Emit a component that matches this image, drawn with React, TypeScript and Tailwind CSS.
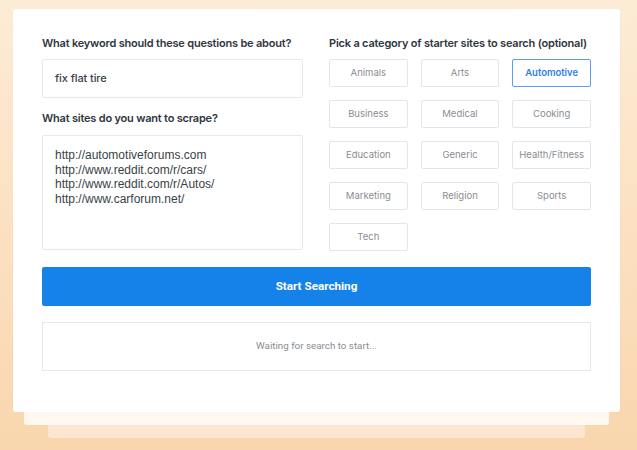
import React from "react";

const cats = [
  "Animals",
  "Arts",
  "Automotive",
  "Business",
  "Medical",
  "Cooking",
  "Education",
  "Generic",
  "Health/Fitness",
  "Marketing",
  "Religion",
  "Sports",
  "Tech",
];

export default function App() {
  return (
    <div
      className="relative w-[637px] h-[450px] overflow-hidden bg-gradient-to-b from-[#fdecd6] to-[#f9d6ad]"
      style={{ fontFamily: "Inter, 'Liberation Sans', sans-serif" }}
    >
      <div className="absolute left-[48px] top-[30px] w-[537px] h-[408px] rounded-[3px] bg-[#fbe7d0]" />
      <div className="absolute left-[24px] top-[20px] w-[585px] h-[405px] rounded-[3px] bg-[#fef8f1]" />
      <div className="absolute left-[13px] top-[9px] w-[607px] h-[403px] rounded-[3px] bg-white px-[29px] pt-[26px] shadow-[0_0_2px_rgba(0,0,0,0.04)]">
        <div className="flex gap-[26px]">
          <div className="w-[261px] flex flex-col">
            <div className="text-[11px] leading-[16px] font-semibold tracking-[-0.2px] text-[#2f3640] whitespace-nowrap">
              What keyword should these questions be about?
            </div>
            <div className="mt-[8px] h-[39px] border border-[#e6e8eb] rounded-[2px] flex items-center px-[12px] text-[11px] font-medium tracking-[-0.1px] text-[#3a3f47]">
              fix flat tire
            </div>
            <div className="mt-[12px] text-[11px] leading-[16px] font-semibold tracking-[-0.2px] text-[#2f3640]">
              What sites do you want to scrape?
            </div>
            <div
              className="mt-[9px] h-[115px] border border-[#e6e8eb] rounded-[2px] px-[12px] pt-[12px] text-[12px] leading-[14.7px] text-[#3a3f47]"
              style={{ fontFamily: "'Liberation Sans', Arial, sans-serif" }}
            >
              <div>http://automotiveforums.com</div>
              <div>http://www.reddit.com/r/cars/</div>
              <div>http://www.reddit.com/r/Autos/</div>
              <div>http://www.carforum.net/</div>
            </div>
          </div>
          <div className="w-[262px] flex flex-col">
            <div className="text-[11px] leading-[16px] font-semibold tracking-[-0.2px] text-[#2f3640] whitespace-nowrap">
              Pick a category of starter sites to search (optional)
            </div>
            <div className="mt-[8px] grid grid-cols-3 gap-x-[13px] gap-y-[13px]">
              {cats.map((c) =>
                c === "Automotive" ? (
                  <div
                    key={c}
                    className="h-[28px] border border-[#5b9ef0] rounded-[2px] flex items-center justify-center text-[9.5px] font-semibold text-[#2f80e8]"
                  >
                    {c}
                  </div>
                ) : (
                  <div
                    key={c}
                    className="h-[28px] border border-[#e4e6e9] rounded-[2px] flex items-center justify-center text-[9.5px] text-[#8a8d92]"
                  >
                    {c}
                  </div>
                )
              )}
            </div>
          </div>
        </div>
        <div
          className="mt-[16px] h-[39px] rounded-[2px] bg-[#1582ea] flex items-center justify-center text-white text-[11.7px] font-bold"
          style={{ fontFamily: "Roboto, 'Liberation Sans', sans-serif" }}
        >
          Start Searching
        </div>
        <div
          className="mt-[16px] h-[49px] border border-[#e6e8eb] flex items-center justify-center text-[9.8px] text-[#8a8d92]"
          style={{ fontFamily: "Roboto, 'Liberation Sans', sans-serif" }}
        >
          Waiting for search to start...
        </div>
      </div>
    </div>
  );
}
